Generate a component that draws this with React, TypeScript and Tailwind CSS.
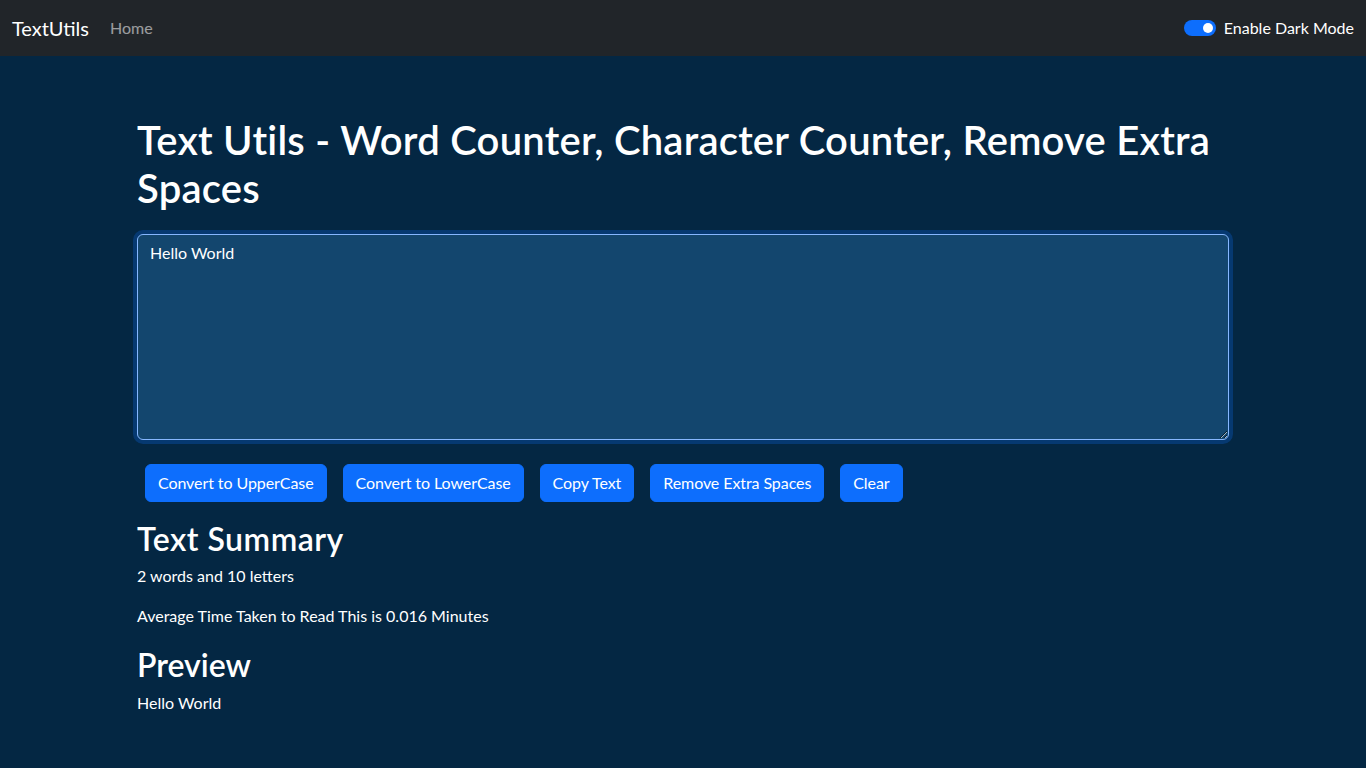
import { useState } from 'react'

const buttons = ['Convert to UpperCase', 'Convert to LowerCase', 'Copy Text', 'Remove Extra Spaces', 'Clear']

function Navbar() {
  return (
    <nav className="h-14 bg-[#212529] flex items-center justify-between px-3">
      <div className="flex items-center">
        <a className="text-xl text-white mr-[13px] leading-[30px]">TextUtils</a>
        <a className="text-base text-white/55 px-2 leading-6">Home</a>
      </div>
      <div className="flex items-center gap-2">
        <div className="w-8 h-4 rounded-full bg-[#0d6efd] flex items-center justify-end px-[3px]">
          <div className="w-2.5 h-2.5 rounded-full bg-white" />
        </div>
        <span className="text-base text-white leading-6">Enable Dark Mode</span>
      </div>
    </nav>
  )
}

export default function App() {
  const [text, setText] = useState('Hello World')
  const words = text.split(/\s+/).filter((w) => w.length > 0)
  const letters = text.replace(/\s/g, '').length

  return (
    <div className="min-h-screen bg-[#042743] text-white font-['Lato',sans-serif]">
      <Navbar />
      <div className="max-w-[1140px] mx-auto px-3 pt-[60px]">
        <div className="px-3">
          <h1 className="text-[40px] font-semibold leading-[48px] tracking-[0.23px] mb-2">
            Text Utils - Word Counter, Character Counter, Remove Extra Spaces
          </h1>
          <div className="mt-[22px] mb-6">
            <textarea
              value={text}
              onChange={(e) => setText(e.target.value)}
              rows={8}
              className="block w-full h-[206px] rounded-md border border-[#86b7fe] bg-[#13466e] text-white text-base leading-6 px-3 py-1.5 outline-none shadow-[0_0_0_4px_rgba(13,110,253,0.25)] resize-y"
            />
          </div>
          <div className="flex">
            {buttons.map((b) => (
              <button
                key={b}
                className="mx-2 bg-[#0d6efd] border border-[#0d6efd] text-white text-base leading-6 tracking-[-0.08px] px-3 py-1.5 rounded-md"
              >
                {b}
              </button>
            ))}
          </div>
          <div className="mt-[18px]">
            <h2 className="text-[32px] font-semibold leading-[38px] tracking-[0.5px] mb-1.5">Text Summary</h2>
            <p className="text-base leading-6 mb-4">
              {words.length} words and {letters} letters
            </p>
            <p className="text-base leading-6 mb-[18px]">
              Average Time Taken to Read This is {(0.008 * words.length).toFixed(3)} Minutes
            </p>
            <h2 className="text-[32px] font-semibold leading-[38px] mb-[7px]">Preview</h2>
            <p className="text-base leading-6">{text}</p>
          </div>
        </div>
      </div>
    </div>
  )
}
